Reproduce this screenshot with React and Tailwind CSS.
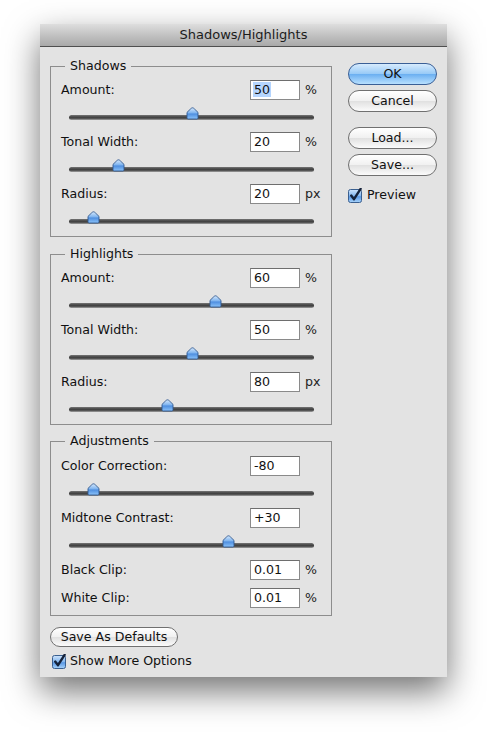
import React from 'react';

const font = { fontFamily: '"DejaVu Sans", "Liberation Sans", sans-serif' };

const groups = [
  {
    title: 'Shadows',
    rows: [
      { label: 'Amount:', value: '50', unit: '%', thumb: 123, selected: true },
      { label: 'Tonal Width:', value: '20', unit: '%', thumb: 49 },
      { label: 'Radius:', value: '20', unit: 'px', thumb: 24 },
    ],
  },
  {
    title: 'Highlights',
    rows: [
      { label: 'Amount:', value: '60', unit: '%', thumb: 146 },
      { label: 'Tonal Width:', value: '50', unit: '%', thumb: 123 },
      { label: 'Radius:', value: '80', unit: 'px', thumb: 98 },
    ],
  },
];

function Thumb() {
  return (
    <svg width="13" height="13" viewBox="0 0 13 13">
      <defs>
        <linearGradient id="thumbFill" x1="0" y1="0" x2="0" y2="1">
          <stop offset="0" stopColor="#d6e9fd" />
          <stop offset="0.45" stopColor="#7fb4ef" />
          <stop offset="0.55" stopColor="#4f8fe0" />
          <stop offset="1" stopColor="#8cc4fa" />
        </linearGradient>
      </defs>
      <path
        d="M6.5 0.8 C7.2 0.8 7.8 1.3 8.4 1.9 L12 5.4 V10.8 C12 11.6 11.5 12 10.8 12 H2.2 C1.5 12 1 11.6 1 10.8 V5.4 L4.6 1.9 C5.2 1.3 5.8 0.8 6.5 0.8 Z"
        fill="url(#thumbFill)"
        stroke="#30588e"
        strokeWidth="0.9"
      />
    </svg>
  );
}

function Slider({ thumb }) {
  return (
    <div className="relative h-[32px] pt-[15px] ml-[18px] w-[245px]">
      <div className="h-[5px] rounded-full bg-[linear-gradient(to_bottom,#777,#3f3f3f_45%,#555_70%,#a5a5a5)]" />
      {/* thumb sits over the track */}
      <div className="absolute top-[7px]" style={{ left: thumb - 6.5 }}>
        <Thumb />
      </div>
    </div>
  );
}

function Field({ label, value, unit, selected }) {
  return (
    <div className="flex items-center h-[20px]">
      <span className="flex-1 pl-[10px] text-[#111]">{label}</span>
      <div className="w-[50px] h-[20px] bg-white border border-[#8a8a8a] border-t-[#6e6e6e] pl-[2px] leading-[18px] text-[#111]">
        {selected ? <span className="bg-[#b5d5fe] px-[1px]">{value}</span> : <span className="px-[1px]">{value}</span>}
      </div>
      <span className="w-[31px] pl-[5px] text-[#222]">{unit}</span>
    </div>
  );
}

function Group({ title, children, className }) {
  return (
    <fieldset className={`border border-[#8d8d8d] ${className}`}>
      <legend className="ml-[14px] px-[5px] leading-[16px] text-[#111]">{title}</legend>
      {children}
    </fieldset>
  );
}

function AquaButton({ children, primary, className }) {
  const skin = primary
    ? 'border-[#3a5f96] bg-[linear-gradient(to_bottom,#d7ebfd,#99cbf7_48%,#6cb0f1_52%,#b8e0ff)]'
    : 'border-[#707070] bg-[linear-gradient(to_bottom,#ffffff,#f1f1f1_48%,#e1e1e1_52%,#fbfbfb)]';
  return (
    <div className={`flex items-center justify-center rounded-full border text-[#111] ${skin} ${className}`}>
      {children}
    </div>
  );
}

function Checkbox() {
  return (
    <svg width="15" height="15" viewBox="0 0 15 15">
      <defs>
        <linearGradient id="boxFill" x1="0" y1="0" x2="0" y2="1">
          <stop offset="0" stopColor="#cfe4fb" />
          <stop offset="0.5" stopColor="#82b6ef" />
          <stop offset="0.55" stopColor="#5a98e4" />
          <stop offset="1" stopColor="#a9d4fb" />
        </linearGradient>
      </defs>
      <rect x="0.5" y="1.5" width="13" height="13" rx="2" fill="url(#boxFill)" stroke="#3a5f8f" />
      <path d="M3.2 7.6 L6 11.2 L12.6 0.8" fill="none" stroke="#15223a" strokeWidth="2.4" strokeLinecap="round" strokeLinejoin="round" />
    </svg>
  );
}

export default function App() {
  return (
    <div className="w-[487px] h-[732px] bg-white pt-[24px] pl-[40px] text-[12.6px]" style={font}>
      <div className="w-[407px] h-[653px] flex flex-col bg-[#e3e3e3] shadow-[0_14px_32px_rgba(0,0,0,0.55)]">
        {/* Title bar */}
        <div className="h-[23px] border-b border-[#4f4f4f] bg-[linear-gradient(to_bottom,#dedede,#c2c2c2_50%,#a9a9a9)] text-center text-[13px] leading-[22px] text-[#1c1c1c]">
          Shadows/Highlights
        </div>

        <div className="flex flex-1">
          {/* Left column */}
          <div className="pl-[10px] w-[292px]">
            {groups.map((g, gi) => (
              <Group key={g.title} title={g.title} className={gi === 0 ? 'mt-[11px] pt-[6px]' : 'mt-[9px] pt-[6px]'}>
                {g.rows.map((r) => (
                  <div key={r.label}>
                    <Field {...r} />
                    <Slider thumb={r.thumb} />
                  </div>
                ))}
              </Group>
            ))}

            <Group title="Adjustments" className="mt-[8px] pt-[7px] pb-[7px]">
              <Field label="Color Correction:" value="-80" unit="" />
              <Slider thumb={24} />
              <Field label="Midtone Contrast:" value="+30" unit="" />
              <Slider thumb={159} />
              <Field label="Black Clip:" value="0.01" unit="%" />
              <div className="mt-[8px]">
                <Field label="White Clip:" value="0.01" unit="%" />
              </div>
            </Group>

            <AquaButton className="mt-[11px] w-[128px] h-[20px]">Save As Defaults</AquaButton>

            <div className="mt-[6px] ml-[2px] flex items-center gap-[3px] h-[16px] text-[#111]">
              <Checkbox />
              <span>Show More Options</span>
            </div>
          </div>

          {/* Right column */}
          <div className="ml-[16px] w-[89px] pt-[16px]">
            <AquaButton primary className="h-[22px]">OK</AquaButton>
            <AquaButton className="mt-[5px] h-[22px]">Cancel</AquaButton>
            <AquaButton className="mt-[15px] h-[22px]">Load...</AquaButton>
            <AquaButton className="mt-[5px] h-[22px]">Save...</AquaButton>
            <div className="mt-[12px] flex items-center gap-[4px] h-[15px] text-[#111]">
              <Checkbox />
              <span>Preview</span>
            </div>
          </div>
        </div>
      </div>
    </div>
  );
}
